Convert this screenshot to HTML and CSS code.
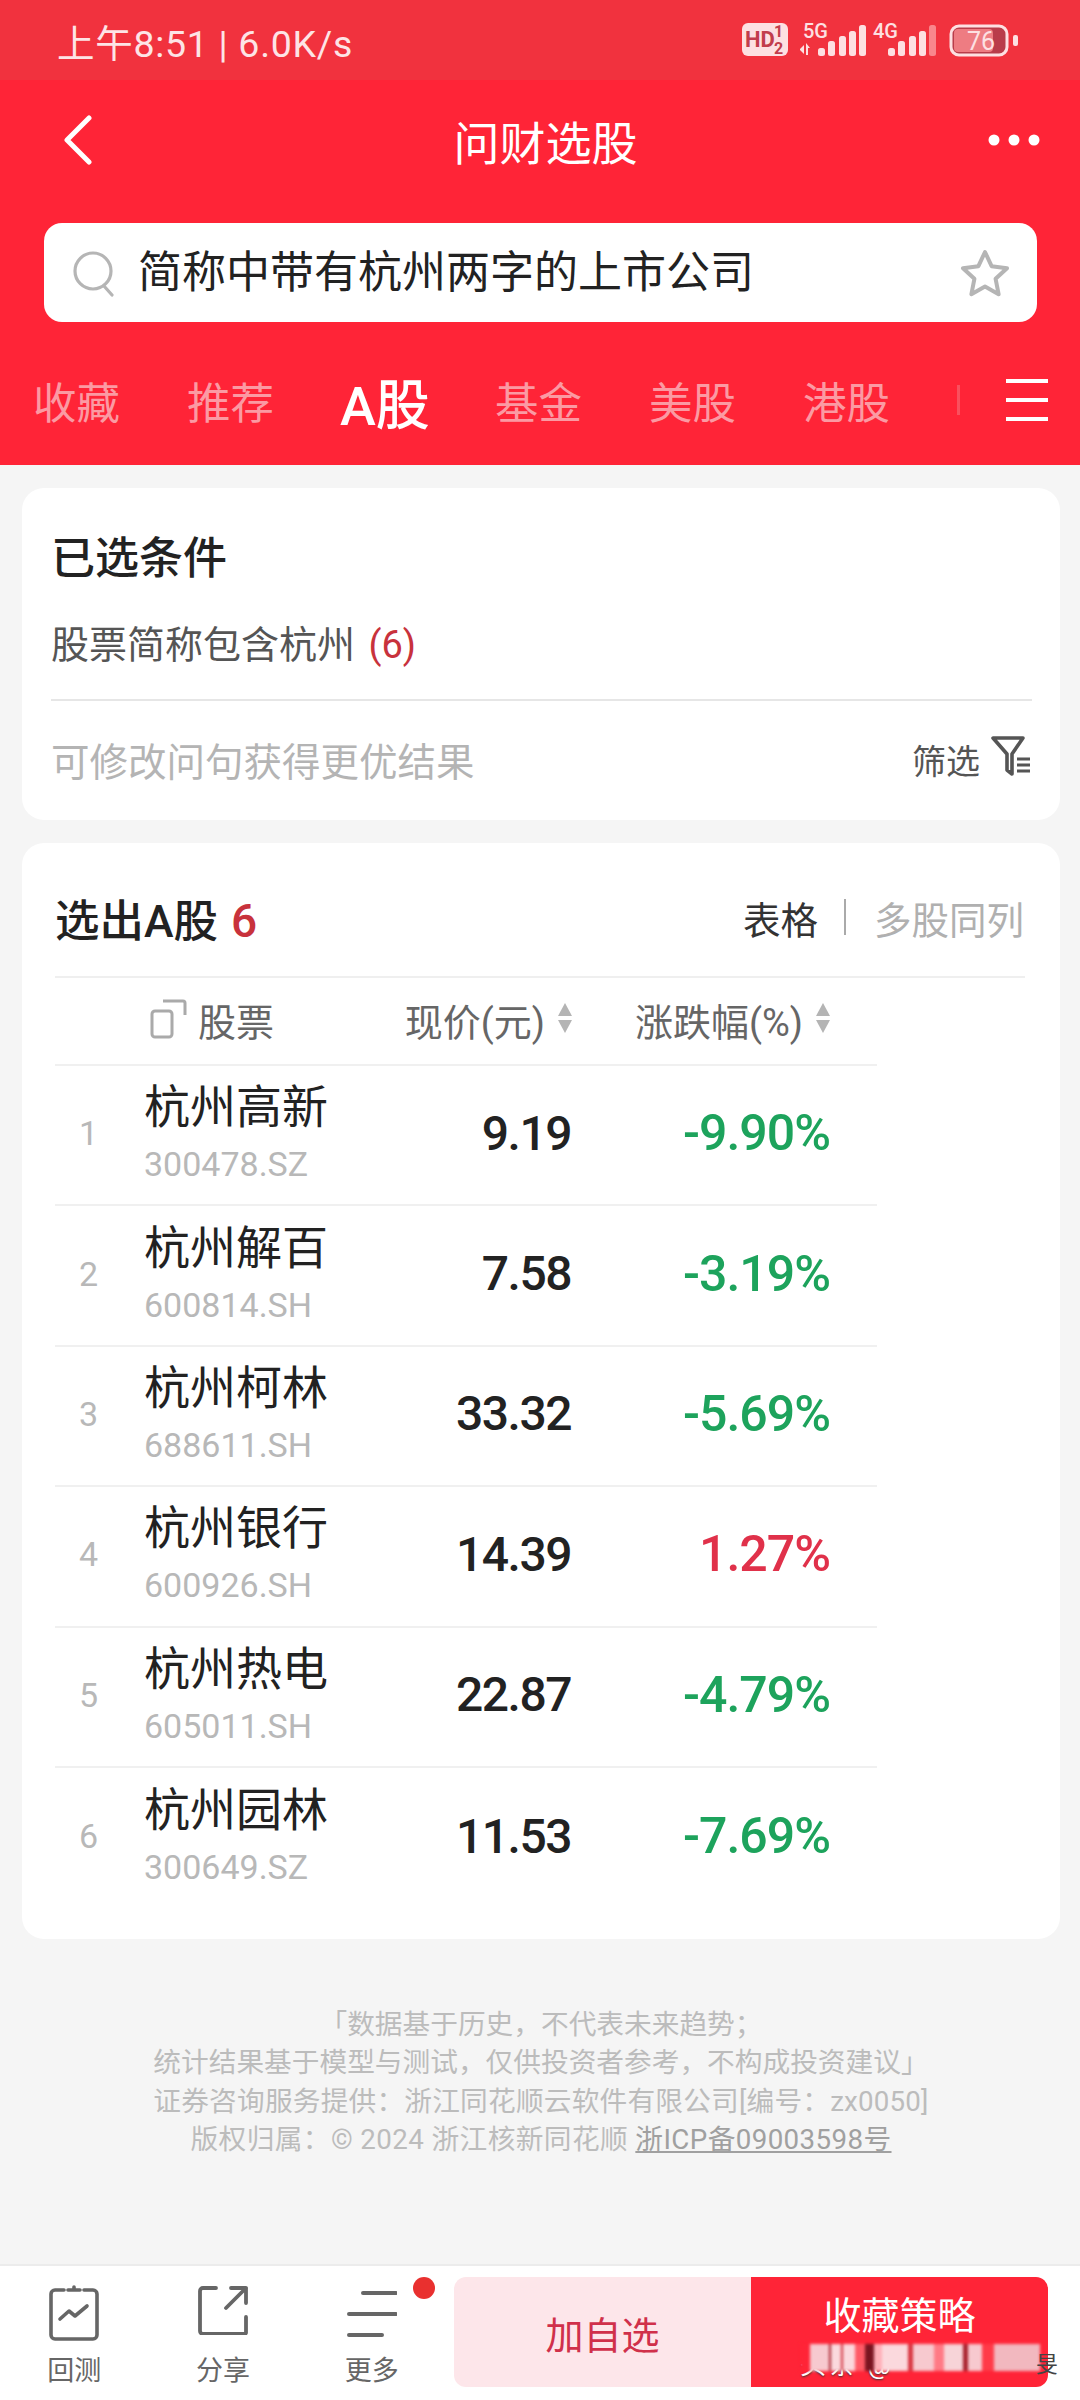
FILE: index.html
```html
<!DOCTYPE html>
<html lang="zh-CN">
<head>
  <meta charset="UTF-8" />
  <title>问财选股</title>
  <link rel="stylesheet" href="styles.css">
</head>
<body>
  <div class="page">
    <header class="top">
      <div class="status">
        <span class="status-text">上午8:51 | 6.0K/s</span>
        <svg class="status-icons" width="276" height="44" viewBox="0 0 276 44">
          <rect x="0" y="5" width="46" height="33" rx="6" fill="#fde0e2"/>
          <text x="3" y="29" class="hd">HD</text>
          <text x="32" y="19" class="hd-small">1</text>
          <text x="32" y="36" class="hd-small">2</text>
          <text x="61" y="20" class="net">5G</text>
          <path d="M58 31l4-4v9l-4-4zM64 25l4 5h-2v7h-2z" fill="#fde0e2"/>
          <rect x="76" y="30" width="7" height="8" rx="2.5" fill="#fde0e2"/>
          <rect x="86" y="23" width="7" height="15" rx="2.5" fill="#fde0e2"/>
          <rect x="97" y="18" width="7" height="20" rx="2.5" fill="#fde0e2"/>
          <rect x="107" y="13" width="7" height="25" rx="2.5" fill="#fde0e2"/>
          <rect x="117" y="7" width="7" height="31" rx="2.5" fill="#fde0e2"/>
          <text x="131" y="20" class="net">4G</text>
          <rect x="146" y="30" width="7" height="8" rx="2.5" fill="#fde0e2"/>
          <rect x="156" y="23" width="7" height="15" rx="2.5" fill="#fde0e2"/>
          <rect x="167" y="18" width="7" height="20" rx="2.5" fill="#fde0e2"/>
          <rect x="177" y="13" width="7" height="25" rx="2.5" fill="#fde0e2"/>
          <rect x="187" y="7" width="7" height="31" rx="2.5" fill="#f9868c"/>
          <rect x="210" y="9" width="54" height="27" rx="7" fill="#b93c4a"/>
          <rect x="212" y="11" width="39" height="23" rx="4" fill="#ee7c82"/>
          <rect x="209" y="8" width="56" height="29" rx="8" fill="none" stroke="#fde0e2" stroke-width="3"/>
          <rect x="271" y="17" width="5" height="11" rx="2" fill="#fde0e2"/>
          <text x="225" y="32" class="batt">76</text>
        </svg>
      </div>
      <nav class="titlebar">
        <svg width="32" height="50" viewBox="0 0 32 50" fill="none" stroke="#fff" stroke-width="5" stroke-linecap="round" stroke-linejoin="round">
          <path d="M27 3 5 25l22 22"/>
        </svg>
        <span class="title">问财选股</span>
        <svg width="52" height="12" viewBox="0 0 52 12" fill="#fff">
          <circle cx="6" cy="6" r="5.5"/><circle cx="26" cy="6" r="5.5"/><circle cx="46" cy="6" r="5.5"/>
        </svg>
      </nav>
      <div class="search">
        <svg class="lens" width="42" height="48" viewBox="0 0 42 48" fill="none" stroke="#b5b5b5" stroke-width="3.2" stroke-linecap="round">
          <circle cx="20" cy="22" r="18"/><path d="M31 37l8 9"/>
        </svg>
        <span class="query">简称中带有杭州两字的上市公司</span>
        <svg class="star" width="50" height="48" viewBox="0 0 50 48" fill="none" stroke="#b5b5b5" stroke-width="4" stroke-linejoin="round">
          <path d="M25 3l6.6 14.2 15.4 2-11.4 10.6 3 15.4L25 37.6l-13.6 7.6 3-15.4L3 19.2l15.4-2z"/>
        </svg>
      </div>
      <div class="tabs">
        <span class="tab">收藏</span>
        <span class="tab">推荐</span>
        <span class="tab active">A股</span>
        <span class="tab">基金</span>
        <span class="tab">美股</span>
        <span class="tab">港股</span>
        <span class="tab-cut"></span>
        <span class="tab-menu"><i></i><i></i><i></i></span>
      </div>
    </header>

    <main class="content">
      <section class="card conditions">
        <h2 class="cond-title">已选条件</h2>
        <p class="cond-line">股票简称包含杭州 <em>(6)</em></p>
        <div class="cond-foot">
          <span class="hint">可修改问句获得更优结果</span>
          <span class="filter">筛选
            <svg width="42" height="42" viewBox="0 0 42 42" fill="none" stroke="#555" stroke-width="3.6" stroke-linejoin="round">
              <path d="M3 3h30L22 19v20l-5-4V19z"/>
              <path d="M27 24h13M27 30h13M27 36h13" stroke-width="3"/>
            </svg>
          </span>
        </div>
      </section>

      <section class="card results">
        <div class="res-head">
          <h2 class="res-title">选出A股 <em>6</em></h2>
          <div class="views">
            <span class="view-on">表格</span>
            <i class="view-sep"></i>
            <span class="view-off">多股同列</span>
          </div>
        </div>
        <div class="table">
          <div class="row head">
            <span class="col-num"></span>
            <span class="col-name head-name">
              <svg width="38" height="40" viewBox="0 0 38 40" fill="none" stroke="#aaa" stroke-width="3">
                <rect x="2" y="12" width="20" height="26" rx="3"/>
                <path d="M13 2h20a2 2 0 0 1 2 2v12"/>
              </svg>
              股票
            </span>
            <span class="col-price head-sort">现价(元)<i class="sort"></i></span>
            <span class="col-pct head-sort">涨跌幅(%)<i class="sort"></i></span>
          </div>
          <div class="row">
            <span class="col-num">1</span>
            <span class="col-name"><b>杭州高新</b><small>300478.SZ</small></span>
            <span class="col-price">9.19</span>
            <span class="col-pct down">-9.90%</span>
          </div>
          <div class="row">
            <span class="col-num">2</span>
            <span class="col-name"><b>杭州解百</b><small>600814.SH</small></span>
            <span class="col-price">7.58</span>
            <span class="col-pct down">-3.19%</span>
          </div>
          <div class="row">
            <span class="col-num">3</span>
            <span class="col-name"><b>杭州柯林</b><small>688611.SH</small></span>
            <span class="col-price">33.32</span>
            <span class="col-pct down">-5.69%</span>
          </div>
          <div class="row">
            <span class="col-num">4</span>
            <span class="col-name"><b>杭州银行</b><small>600926.SH</small></span>
            <span class="col-price">14.39</span>
            <span class="col-pct up">1.27%</span>
          </div>
          <div class="row">
            <span class="col-num">5</span>
            <span class="col-name"><b>杭州热电</b><small>605011.SH</small></span>
            <span class="col-price">22.87</span>
            <span class="col-pct down">-4.79%</span>
          </div>
          <div class="row">
            <span class="col-num">6</span>
            <span class="col-name"><b>杭州园林</b><small>300649.SZ</small></span>
            <span class="col-price">11.53</span>
            <span class="col-pct down">-7.69%</span>
          </div>
        </div>
      </section>

      <footer class="notes">
        <p>「数据基于历史，不代表未来趋势；</p>
        <p>统计结果基于模型与测试，仅供投资者参考，不构成投资建议」</p>
        <p class="note-wide">证券咨询服务提供：浙江同花顺云软件有限公司[编号：zx0050]</p>
        <p class="note-wider">版权归属：© 2024 浙江核新同花顺 <u>浙ICP备09003598号</u></p>
      </footer>
    </main>

    <div class="bottom">
      <div class="tools">
        <div class="tool">
          <svg width="50" height="56" viewBox="0 0 50 56" fill="none" stroke="#666" stroke-width="3.6" stroke-linecap="round" stroke-linejoin="round">
            <path d="M15 5H6a4 4 0 0 0-4 4v41a4 4 0 0 0 4 4h38a4 4 0 0 0 4-4V9a4 4 0 0 0-4-4h-9"/>
            <path d="M19 5h12M25 2v3"/>
            <path d="M11 34l9-8 6 5 12-10"/>
          </svg>
          <span>回测</span>
        </div>
        <div class="tool">
          <svg width="50" height="50" viewBox="0 0 50 50" fill="none" stroke="#666" stroke-width="3.8" stroke-linecap="round" stroke-linejoin="round">
            <path d="M18 3H5a3 3 0 0 0-3 3v40a3 3 0 0 0 3 3h42a2 2 0 0 0 1-2V32"/>
            <path d="M28 23 48 3M33 3h15v15"/>
          </svg>
          <span>分享</span>
        </div>
        <div class="tool tool-more">
          <svg width="50" height="50" viewBox="0 0 50 50" fill="none" stroke="#666" stroke-width="4" stroke-linecap="round">
            <path d="M16 4h33M2 25h47M2 46h33"/>
          </svg>
          <span>更多</span>
          <i class="dot"></i>
        </div>
      </div>
      <div class="actions">
        <button class="btn-light">加自选</button>
        <button class="btn-red">收藏策略</button>
      </div>
      <div class="watermark">
        <span class="wm-text">头条 @</span>
        <i class="wm-smear"></i>
        <span class="wm-end">旻</span>
      </div>
    </div>
  </div>
</body>
</html>
```

FILE: styles.css
```css
* {
  box-sizing: border-box;
}

body {
  margin: 0;
  font-family: Roboto, "Noto Sans CJK SC", sans-serif;
  color: #222;
  background: #f5f5f5;
}

.page {
  position: relative;
  display: flex;
  flex-direction: column;
  width: 1080px;
  height: 2400px;
  overflow: hidden;
}

/* red header */
.top {
  height: 465px;
  background: #ff2437;
  color: #fff;
}

.status {
  display: flex;
  align-items: center;
  justify-content: space-between;
  height: 80px;
  padding: 0 62px 0 57px;
  background: #f1323e;
  color: #fde4e6;
}

.status-text {
  font-size: 37.5px;
  letter-spacing: 0.7px;
}

.hd {
  font: 700 22px Roboto, sans-serif;
  fill: #c23d4c;
}

.hd-small {
  font: 700 16px Roboto, sans-serif;
  fill: #c23d4c;
}

.net {
  font: 500 20px Roboto, sans-serif;
  fill: #fde0e2;
}

.batt {
  font: 400 25px Roboto, sans-serif;
  fill: #fde0e2;
}

.titlebar {
  display: flex;
  align-items: center;
  justify-content: space-between;
  height: 120px;
  padding: 0 40px 0 62px;
}

.title {
  margin-left: 9px;
  font-size: 46px;
}

.search {
  display: flex;
  align-items: center;
  height: 99px;
  margin: 23px 43px 0 44px;
  padding: 0 27px 0 29px;
  background: #fff;
  border-radius: 18px;
  color: #222;
}

.lens {
  flex: none;
  margin-right: 23px;
}

.query {
  flex: 1;
  font-size: 44px;
  line-height: 1;
}

.tabs {
  display: flex;
  align-items: center;
  height: 124px;
  margin-top: 16px;
  padding: 0 32px 0 33px;
}

.tab {
  width: 86px;
  margin-right: 68px;
  font-size: 43.5px;
  white-space: nowrap;
  color: #fb9aa3;
}

.tab.active {
  width: 92px;
  margin: 2px 63px 0 -1px;
  font-size: 54px;
  font-weight: 500;
  color: #fff;
}

.tab-cut {
  width: 3px;
  height: 30px;
  background: #f9505e;
}

.tab-menu {
  display: flex;
  flex-direction: column;
  gap: 15px;
  width: 42px;
  margin-left: auto;
}

.tab-menu i {
  height: 4px;
  background: #fff;
}

/* cards */
.content {
  flex: 1;
  padding: 23px 20px 0 22px;
}

.card {
  background: #fff;
  border-radius: 22px;
}

.conditions {
  height: 332px;
  padding: 0 28px 0 29px;
}

.cond-title {
  margin: 0;
  padding-top: 45px;
  font-size: 44px;
  line-height: 52px;
  font-weight: 500;
}

.cond-line {
  height: 116px;
  margin: 0;
  padding-top: 35px;
  border-bottom: 2px solid #e6e6e6;
  font-size: 38px;
  line-height: 50px;
  color: #555;
}

.cond-line em {
  margin-left: 4px;
  font-style: normal;
  color: #c8323c;
}

.cond-foot {
  display: flex;
  align-items: center;
  justify-content: space-between;
  height: 116px;
}

.hint {
  font-size: 38.5px;
  color: #b4b4b4;
}

.filter {
  display: flex;
  align-items: center;
  gap: 10px;
  font-size: 34px;
  color: #555;
}

.filter svg {
  margin-top: -7px;
}

.results {
  height: 1096px;
  margin-top: 23px;
  padding: 0 35px 0 33px;
}

.res-head {
  display: flex;
  align-items: center;
  justify-content: space-between;
  height: 135px;
  padding-top: 15px;
  border-bottom: 2px solid #efefef;
}

.res-title {
  margin: 0;
  font-size: 44.5px;
  font-weight: 500;
}

.res-title em {
  margin-left: 2px;
  font-size: 46px;
  font-style: normal;
  color: #c8323c;
}

.views {
  display: flex;
  align-items: center;
  padding-right: 1px;
  font-size: 37.5px;
}

.view-on {
  color: #333;
}

.view-sep {
  width: 2px;
  height: 36px;
  margin: 0 28px 0 26px;
  background: #aaa;
}

.view-off {
  color: #b0b0b0;
}

/* stock table */
.table {
  width: 822px;
}

.row {
  display: flex;
  align-items: center;
  height: 140.4px;
  padding-bottom: 4px;
  border-bottom: 2px solid #f0f0f0;
}

.row:last-child {
  border-bottom: none;
}

.row.head {
  height: 88px;
  font-size: 38px;
  color: #666;
}

.col-num {
  width: 89px;
  padding-right: 22px;
  text-align: center;
  font-size: 34px;
  color: #b8b8b8;
}

.col-name {
  display: flex;
  flex-direction: column;
  width: 243px;
  padding-bottom: 4px;
}

.col-name b {
  font-size: 46px;
  line-height: 56px;
  font-weight: 400;
  color: #222;
}

.col-name small {
  margin-top: 10px;
  font-size: 34px;
  line-height: 38px;
  color: #b8b8b8;
}

.head-name {
  flex-direction: row;
  align-items: center;
  gap: 10px;
  margin-left: 6px;
  width: 237px;
  padding-bottom: 0;
  font-size: 38px;
}

.col-price,
.col-pct {
  text-align: right;
  font-weight: 500;
}

.col-price {
  width: 184px;
  font-size: 48px;
  letter-spacing: -1.5px;
  color: #222;
}

.col-pct {
  width: 259px;
  font-size: 50px;
  letter-spacing: -1px;
}

.row.head .head-sort {
  position: relative;
  font-size: 38px;
  font-weight: 400;
  letter-spacing: 0;
  color: #666;
}

.row.head .col-price {
  width: 158px;
}

.row.head .col-pct {
  width: 258px;
}

.sort {
  position: absolute;
  right: -27px;
  top: 50%;
  width: 0;
  height: 0;
  margin-top: -16px;
  border-left: 7px solid transparent;
  border-right: 7px solid transparent;
  border-bottom: 13px solid #b4b4b4;
}

.sort::after {
  content: "";
  position: absolute;
  left: -7px;
  top: 17px;
  border-left: 7px solid transparent;
  border-right: 7px solid transparent;
  border-top: 13px solid #b4b4b4;
}

.down {
  color: #1da35c;
}

.up {
  color: #e0314a;
}

.notes {
  margin-top: 67px;
  text-align: center;
  font-size: 27.7px;
  line-height: 38.4px;
  color: #bcbcbc;
}

.notes p {
  margin: 0;
  white-space: nowrap;
}

.notes .note-wide {
  letter-spacing: 0.2px;
}

.notes .note-wider {
  letter-spacing: 0.4px;
}

.notes u {
  color: #a0a0a0;
}

/* bottom toolbar */
.bottom {
  position: relative;
  display: flex;
  height: 136px;
  border-top: 2px solid #ececec;
  background: #fff;
}

.tools {
  display: flex;
  width: 454px;
  padding-right: 8px;
}

.tool {
  position: relative;
  display: flex;
  flex: 1;
  flex-direction: column;
  align-items: center;
  justify-content: space-between;
  padding: 19px 0 13px;
  font-size: 27px;
  line-height: 32px;
  color: #666;
}

.tool-more svg {
  margin-top: 4px;
}

.dot {
  position: absolute;
  top: 11px;
  right: 11px;
  width: 22px;
  height: 22px;
  border-radius: 50%;
  background: #e9302f;
}

.actions {
  display: flex;
  width: 594px;
  height: 110px;
  margin-top: 11px;
  border-radius: 12px;
  overflow: hidden;
}

.actions button {
  border: none;
  font-family: inherit;
  font-size: 38px;
}

.btn-light {
  width: 297px;
  background: #fde6ea;
  color: #d0304a;
}

.btn-red {
  width: 297px;
  padding-bottom: 40px;
  background: #ff2437;
  color: #fff;
}

/* watermark lying over the red button */
.watermark {
  position: absolute;
  left: 800px;
  bottom: 20px;
  display: flex;
  align-items: flex-end;
  width: 258px;
  height: 36px;
  font-size: 26px;
  line-height: 30px;
  white-space: nowrap;
  color: #fff;
  text-shadow: 0 1px 2px #333;
}

.wm-text {
  width: 90px;
  letter-spacing: 3px;
}

.wm-smear {
  position: absolute;
  top: 0;
  left: 0;
  width: 240px;
  height: 27px;
  filter: blur(1.5px);
  background: linear-gradient(90deg,
    #ff2437 0 4%, #f7c9cf 4% 12%, #a8202c 12% 13%, #fbd9dd 13% 17%, #d0303c 17% 18%, #fbd9dd 18% 23%,
    #ff5a66 23% 27%, #7a1420 27% 31%, #ffb0b8 31% 34%, #fbd9dd 34% 45%, #d8343f 45% 47%, #f7c9cf 47% 56%,
    #ff7a85 56% 60%, #f7d4d8 60% 68%, #a8202c 68% 70%, #f7c9cf 70% 76%, #ff3a48 76% 81%, #f2b8bf 81% 100%);
}

.wm-end {
  position: absolute;
  right: 0;
  bottom: 1px;
  font-size: 22px;
  line-height: 28px;
  color: #444;
  text-shadow: none;
}
```
